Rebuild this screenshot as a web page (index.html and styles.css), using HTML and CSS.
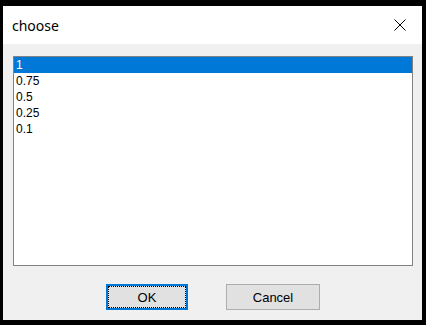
FILE: index.html
```html
<!DOCTYPE html>
<html>
<head>
<meta charset="utf-8">
<link rel="stylesheet" href="styles.css">
</head>
<body>
<div class="window">
  <div class="titlebar">
    <span class="title">choose</span>
    <svg class="close" width="12" height="12" viewBox="0 0 12 12"><path d="M0.5 0.5 L11.5 11.5 M11.5 0.5 L0.5 11.5" stroke="#000" stroke-width="1" fill="none"/></svg>
  </div>
  <div class="content">
    <div class="listbox">
      <div class="item selected">1</div>
      <div class="item">0.75</div>
      <div class="item">0.5</div>
      <div class="item">0.25</div>
      <div class="item">0.1</div>
    </div>
    <div class="buttons">
      <button class="btn ok">OK</button>
      <button class="btn cancel">Cancel</button>
    </div>
  </div>
</div>
</body>
</html>
```
FILE: styles.css
```css
html, body {
  margin: 0;
  padding: 0;
  background: #000;
  width: 426px;
  height: 325px;
  overflow: hidden;
}
.window {
  margin: 6px 0 0 3px;
  width: 419px;
  height: 314px;
  background: #f0f0f0;
  display: flex;
  flex-direction: column;
}
.titlebar {
  height: 38px;
  background: #fff;
  display: flex;
  align-items: center;
  justify-content: space-between;
  padding: 0 16px 0 9px;
  flex: none;
}
.title {
  font-family: "Noto Sans", sans-serif;
  font-size: 14px;
  color: #000;
  margin-top: 1px;
}
.close {
  display: block;
}
.content {
  flex: 1;
  display: flex;
  flex-direction: column;
  padding: 12px 9px 0 10px;
}
.listbox {
  height: 208px;
  border: 1px solid #828282;
  background: #fff;
  font-family: "Liberation Sans", Arial, sans-serif;
  font-size: 12px;
  color: #000;
}
.item {
  height: 16px;
  line-height: 16px;
  padding-left: 2px;
}
.item.selected {
  background: #0078d7;
  color: #fff;
}
.buttons {
  display: flex;
  justify-content: center;
  gap: 38px;
  margin-top: 18px;
  padding-left: 0;
}
.btn {
  height: 26px;
  background: #e1e1e1;
  border: 1px solid #adadad;
  font-family: "Liberation Sans", Arial, sans-serif;
  font-size: 13px;
  color: #000;
  padding: 0;
  margin: 0;
}
.btn.ok {
  width: 82px;
  border: 2px solid #0078d7;
  outline: 1px dotted #000;
  outline-offset: -3px;
}
.btn.cancel {
  width: 94px;
}
```
